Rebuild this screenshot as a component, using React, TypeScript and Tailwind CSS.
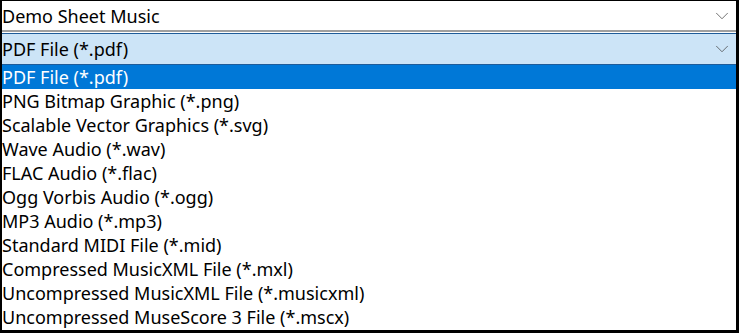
import { ChevronDown } from "lucide-react";

const formats = [
  "PDF File (*.pdf)",
  "PNG Bitmap Graphic (*.png)",
  "Scalable Vector Graphics (*.svg)",
  "Wave Audio (*.wav)",
  "FLAC Audio (*.flac)",
  "Ogg Vorbis Audio (*.ogg)",
  "MP3 Audio (*.mp3)",
  "Standard MIDI File (*.mid)",
  "Compressed MusicXML File (*.mxl)",
  "Uncompressed MusicXML File (*.musicxml)",
  "Uncompressed MuseScore 3 File (*.mscx)",
];

export default function App() {
  const selected = 0;

  return (
    <div
      className="w-[739px] h-[333px] bg-black pt-[1px] pl-[2px] pr-[3px] pb-[3px] overflow-hidden"
      style={{ fontFamily: '"Noto Sans", "Open Sans", sans-serif' }}
    >
      <div className="flex flex-col h-full bg-white text-[18px] text-black">
        {/* score picker */}
        <div className="flex items-center justify-between h-[29px] pr-[3px]">
          <span className="leading-none">Demo Sheet Music</span>
          <ChevronDown className="w-[22px] h-[22px] text-[#404040]" strokeWidth={0.8} />
        </div>
        <div className="h-[2px] bg-[#a0a0a0]" />
        <div className="h-[1px] bg-white" />

        {/* format combobox, open */}
        <div className="flex items-center justify-between h-[32px] bg-[#cce4f7] border-y border-[#1f5c99] pr-[3px]">
          <span className="leading-none">PDF File (*.pdf)</span>
          <ChevronDown className="w-[22px] h-[22px] text-[#404040]" strokeWidth={0.8} />
        </div>

        <ul className="flex flex-col">
          {formats.map((f, i) => (
            <li
              key={f}
              className={
                "h-[24px] flex items-center leading-none whitespace-nowrap " +
                (i === selected ? "bg-[#0078d7] text-white" : "")
              }
            >
              {f}
            </li>
          ))}
        </ul>
      </div>
    </div>
  );
}
